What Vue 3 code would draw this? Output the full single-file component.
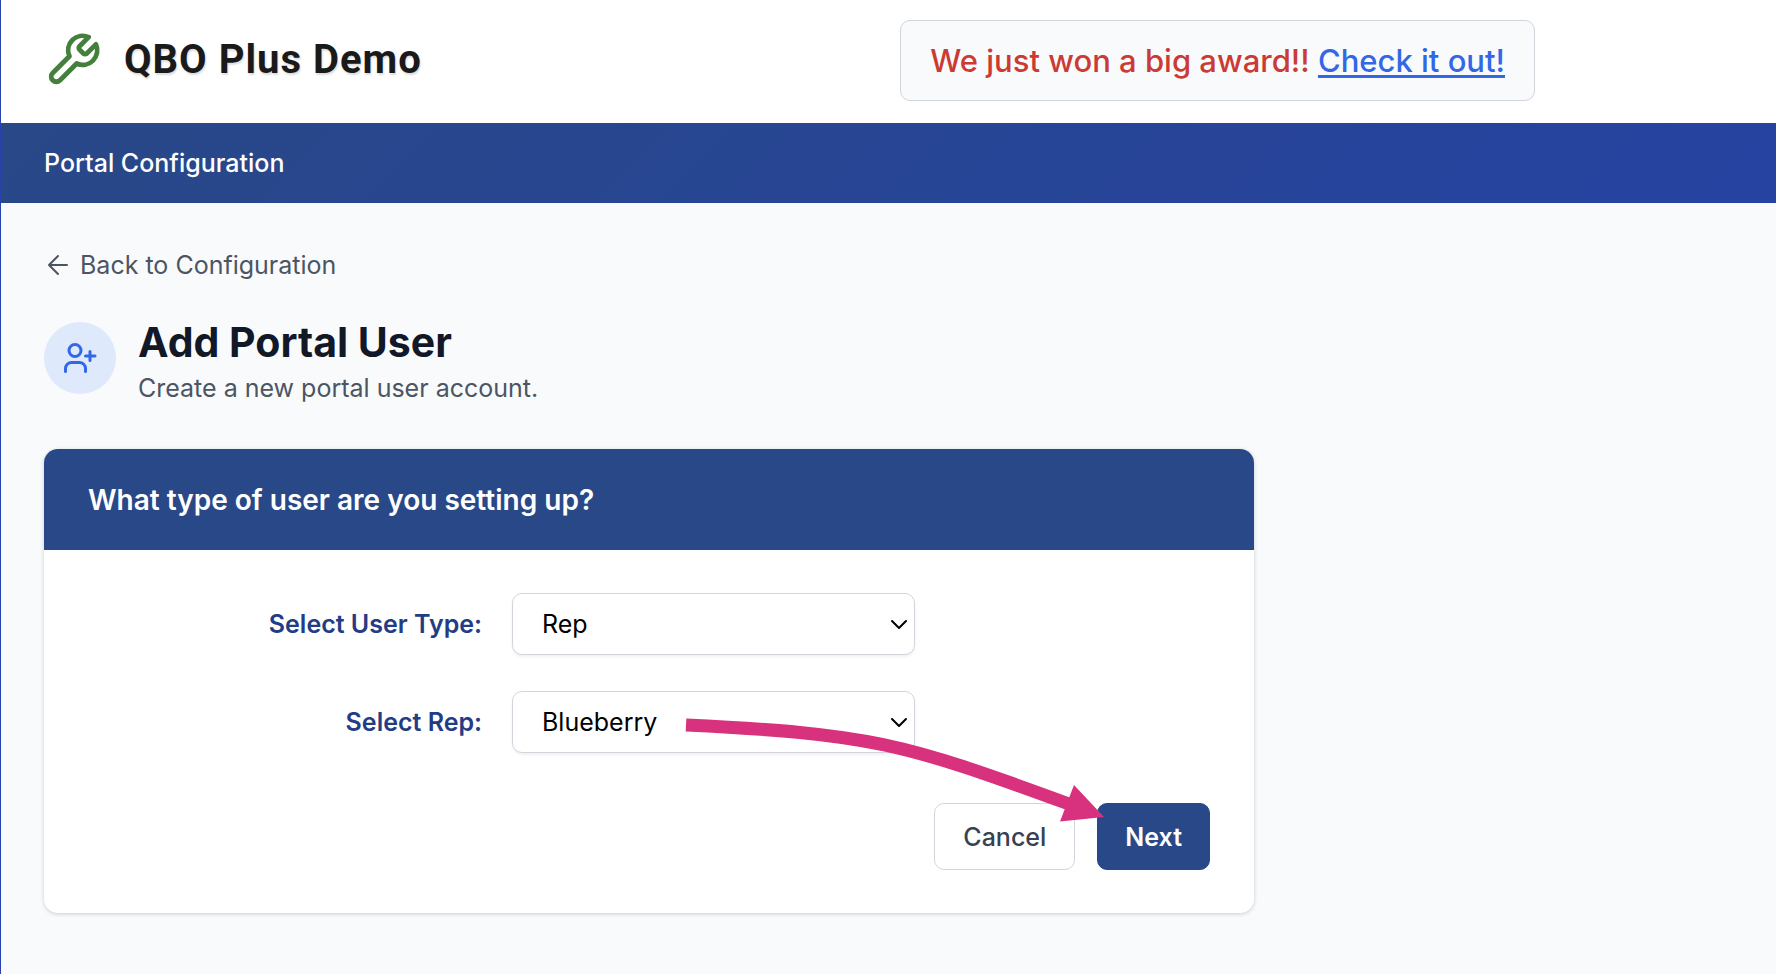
<script setup>
import { ref } from 'vue'

const userType = ref('Rep')
const rep = ref('Blueberry')
</script>

<template>
  <div class="page">
    <header class="top">
      <div class="brand">
        <svg class="wrench" viewBox="0 0 24 24" aria-hidden="true">
          <path d="M14.7 6.3a1 1 0 0 0 0 1.4l1.6 1.6a1 1 0 0 0 1.4 0l3.77-3.77a6 6 0 0 1-7.94 7.94l-6.91 6.91a2.12 2.12 0 0 1-3-3l6.91-6.91a6 6 0 0 1 7.94-7.94l-3.76 3.76z" />
        </svg>
        <span class="brand-name">QBO Plus Demo</span>
      </div>
      <p class="notice">We just won a big award!! <a href="#award">Check it out!</a></p>
    </header>

    <nav class="bar"><a href="#portal">Portal Configuration</a></nav>

    <main class="content">
      <a class="back" href="#configuration">
        <svg viewBox="0 0 24 24" aria-hidden="true"><path d="M21 12H3m9 9-9-9 9-9" /></svg>
        <span>Back to Configuration</span>
      </a>

      <div class="heading">
        <div class="avatar">
          <svg viewBox="0 0 34 30" aria-hidden="true">
            <circle cx="12" cy="7.5" r="6" />
            <path d="M2.500 28.5v-3a6 6 0 0 1 6-6h8a6 6 0 0 1 6 6v3M27 8.500v9M22.500 13h9.500" />
          </svg>
        </div>
        <div>
          <h1>Add Portal User</h1>
          <p>Create a new portal user account.</p>
        </div>
      </div>

      <form class="card" @submit.prevent>
        <h2>What type of user are you setting up?</h2>
        <div class="fields">
          <label for="user-type">Select User Type:</label>
          <div class="select">
            <select id="user-type" v-model="userType">
              <option>Rep</option>
            </select>
            <svg viewBox="0 0 18 12" aria-hidden="true"><path d="m2 2 7 7 7-7" /></svg>
          </div>
          <label for="rep">Select Rep:</label>
          <div class="select">
            <select id="rep" v-model="rep">
              <option>Blueberry</option>
            </select>
            <svg viewBox="0 0 18 12" aria-hidden="true"><path d="m2 2 7 7 7-7" /></svg>
          </div>
        </div>
        <div class="actions">
          <button type="button" class="cancel">Cancel</button>
          <button type="submit" class="next">Next</button>
          <svg class="pointer" viewBox="0 0 420 110" aria-hidden="true">
            <path class="shaft" d="M1 14C185 23 215 31 384 93" />
            <path class="head" d="M389 74 419 106 375 110.500z" />
          </svg>
        </div>
      </form>
    </main>
  </div>
</template>

<style>
body {
  margin: 0;
}
</style>

<style scoped>
.page {
  box-sizing: border-box;
  min-height: 100vh;
  border-left: 1px solid #2643ae;
  background: #f9fafc;
  color: #4b5563;
  font-family: Inter, "Liberation Sans", sans-serif;
  font-size: 25px;
  line-height: 32px;
}
.page * {
  box-sizing: border-box;
}
h1, h2, p {
  margin: 0;
}
a {
  color: inherit;
  text-decoration: none;
}
svg {
  display: block;
  fill: none;
  stroke: currentColor;
  stroke-linecap: round;
  stroke-linejoin: round;
}
.top {
  display: flex;
  align-items: flex-start;
  justify-content: space-between;
  padding: 20px 241px 22px 43px;
  background: #fff;
}
.brand {
  display: flex;
  align-items: center;
  gap: 22px;
  padding-top: 11px;
}
.wrench {
  width: 58px;
  height: 58px;
  color: #457f3d;
  stroke-width: 2;
}
.brand-name {
  color: #1a1a1a;
  font: bold 40px/58px Roboto, "Liberation Sans", sans-serif;
  letter-spacing: 1px;
  text-shadow: 1px 2px 2px rgba(0, 0, 0, 0.14);
}
.notice {
  padding: 19px 29px;
  border: 1px solid #d1d5db;
  border-radius: 10px;
  background: #f9fafc;
  color: #cb3a33;
  font-size: 31px;
  font-weight: 500;
  line-height: 41px;
  white-space: nowrap;
}
.notice a {
  color: #3268e6;
  text-decoration: underline;
  text-decoration-thickness: 3px;
  text-underline-offset: 3px;
}
.bar {
  padding: 24px 43px;
  background: linear-gradient(135deg, #294887, #2643a2);
  color: #fff;
  font-weight: 500;
}
.content {
  padding: 46px 43px;
}
.back {
  display: flex;
  width: fit-content;
  align-items: center;
  gap: 10px;
  padding-left: 2px;
}
.back svg {
  width: 24px;
  height: 24px;
  stroke-width: 2;
}
.heading {
  display: flex;
  align-items: flex-start;
  gap: 22px;
  margin: 36px 0 40px;
}
.avatar {
  display: grid;
  width: 72px;
  height: 72px;
  margin-top: 5px;
  place-items: center;
  border-radius: 50%;
  background: #dee9fc;
  color: #3268e6;
}
.avatar svg {
  width: 34px;
  height: 30px;
  stroke-width: 3;
}
h1 {
  color: #111827;
  font-size: 41px;
  font-weight: 700;
  line-height: 50px;
}
.heading p {
  line-height: 42px;
}
.card {
  max-width: 1210px;
  border-radius: 14px;
  background: #fff;
  box-shadow: 0 1px 4px rgba(0, 0, 0, 0.18);
}
h2 {
  padding: 35px 44px 34px;
  border-radius: 14px 14px 0 0;
  background: #294887;
  color: #fff;
  font-size: 28px;
  font-weight: 600;
  line-height: 32px;
}
.fields {
  display: grid;
  grid-template-columns: 36.2% 403px;
  column-gap: 30px;
  row-gap: 36px;
  align-items: center;
  padding-top: 43px;
}
.fields label {
  color: #243c86;
  font-weight: 600;
  text-align: right;
}
.select {
  position: relative;
}
select {
  display: block;
  width: 100%;
  height: 62px;
  padding: 0 44px 0 29px;
  border: 1px solid #d1d5db;
  border-radius: 10px;
  appearance: none;
  background: #fff;
  box-shadow: 0 2px 3px rgba(0, 0, 0, 0.06);
  color: #000;
  font: inherit;
}
.select svg {
  position: absolute;
  top: 26px;
  right: 7px;
  width: 18px;
  height: 12px;
  color: #000;
  stroke-width: 2;
  pointer-events: none;
}
.actions {
  position: relative;
  display: flex;
  justify-content: flex-end;
  gap: 22px;
  padding: 50px 44px 43px;
}
button {
  height: 67px;
  padding: 0 28px;
  border: 1px solid #d1d5db;
  border-radius: 10px;
  background: #fff;
  color: #374151;
  font: inherit;
  font-weight: 500;
}
.next {
  padding: 0 27px;
  border-color: #294887;
  background: #294887;
  color: #fff;
  font-weight: 600;
}
.pointer {
  position: absolute;
  top: -42px;
  right: 149px;
  width: 420px;
  height: 110px;
  overflow: visible;
  pointer-events: none;
}
.shaft {
  stroke: #d8327e;
  stroke-width: 13;
  stroke-linecap: butt;
}
.head {
  fill: #d8327e;
  stroke: none;
}
</style>
